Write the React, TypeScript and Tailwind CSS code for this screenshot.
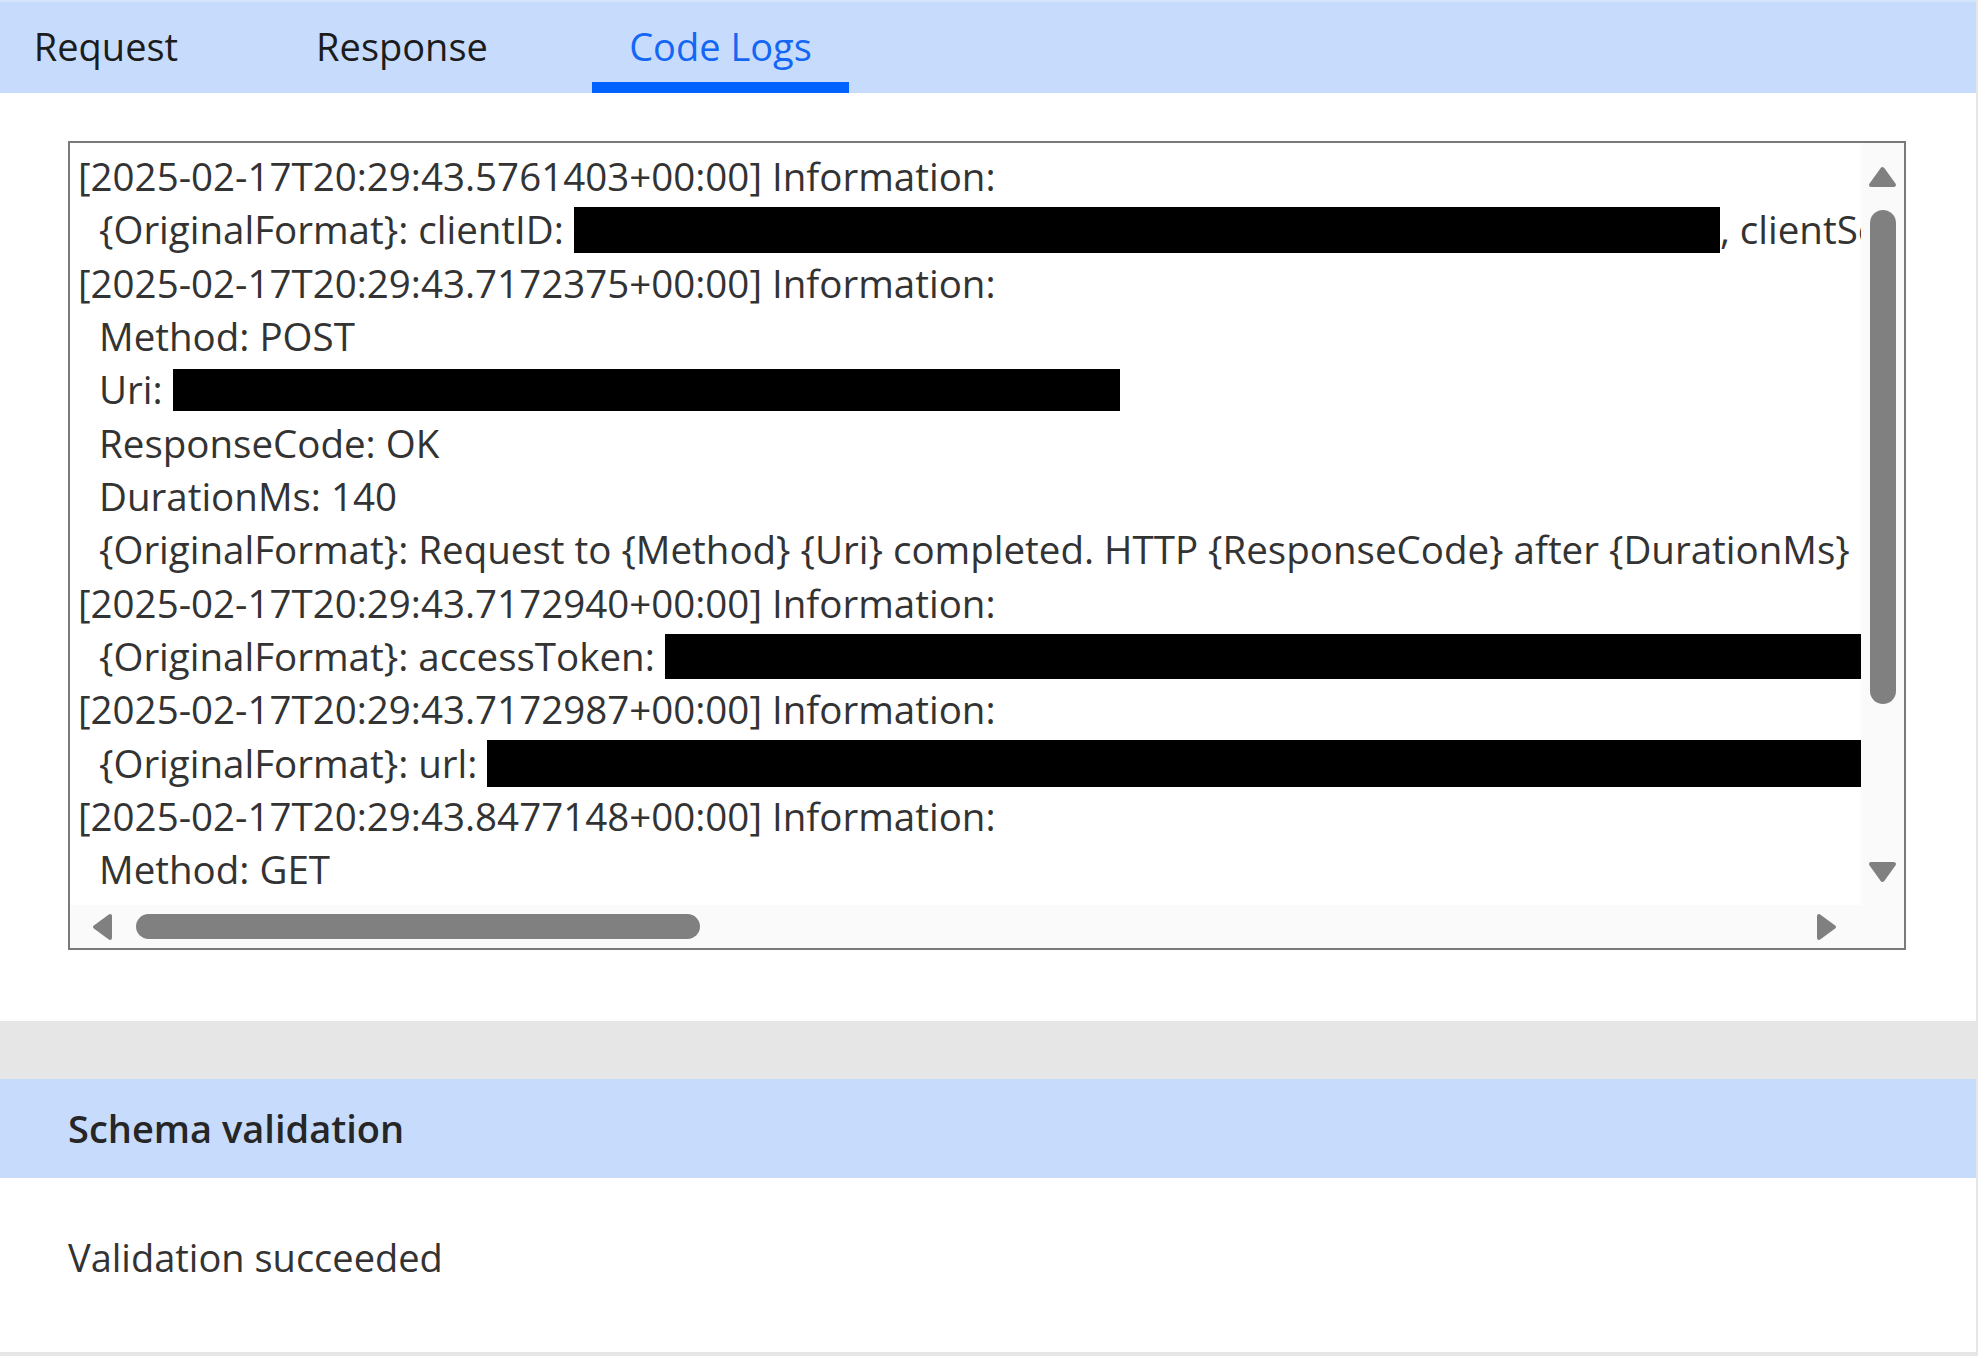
import React from "react";

type Part = { text?: string; bar?: { w: number; h: number } };

interface LogLine {
  indent?: boolean;
  parts: Part[];
}

const LOG_LINES: LogLine[] = [
  { parts: [{ text: "[2025-02-17T20:29:43.5761403+00:00] Information:" }] },
  {
    indent: true,
    parts: [
      { text: "{OriginalFormat}: clientID: " },
      { bar: { w: 1146, h: 46 } },
      { text: ", clientSecret: ********" },
    ],
  },
  { parts: [{ text: "[2025-02-17T20:29:43.7172375+00:00] Information:" }] },
  { indent: true, parts: [{ text: "Method: POST" }] },
  { indent: true, parts: [{ text: "Uri: " }, { bar: { w: 947, h: 42 } }] },
  { indent: true, parts: [{ text: "ResponseCode: OK" }] },
  { indent: true, parts: [{ text: "DurationMs: 140" }] },
  {
    indent: true,
    parts: [
      {
        text: "{OriginalFormat}: Request to {Method} {Uri} completed. HTTP {ResponseCode} after {DurationMs} ms",
      },
    ],
  },
  { parts: [{ text: "[2025-02-17T20:29:43.7172940+00:00] Information:" }] },
  {
    indent: true,
    parts: [{ text: "{OriginalFormat}: accessToken: " }, { bar: { w: 1600, h: 45 } }],
  },
  { parts: [{ text: "[2025-02-17T20:29:43.7172987+00:00] Information:" }] },
  {
    indent: true,
    parts: [{ text: "{OriginalFormat}: url: " }, { bar: { w: 1600, h: 47 } }],
  },
  { parts: [{ text: "[2025-02-17T20:29:43.8477148+00:00] Information:" }] },
  { indent: true, parts: [{ text: "Method: GET" }] },
];

const TABS = [
  { label: "Request", width: "w-[212px]" },
  { label: "Response", width: "w-[240px]" },
  { label: "Code Logs", width: "w-[257px]", active: true },
];

function Arrow({ dir }: { dir: "up" | "down" | "left" | "right" }) {
  const points = {
    up: "3,19 14.5,3 26,19",
    down: "3,3 14.5,19 26,3",
    left: "18,3 18,25 3,14",
    right: "3,3 3,25 18,14",
  }[dir];
  const vertical = dir === "up" || dir === "down";
  return (
    <svg viewBox={vertical ? "0 0 29 22" : "0 0 21 28"} className={vertical ? "w-[29px] h-[22px]" : "w-[21px] h-[28px]"}>
      <polygon points={points} fill="#808080" stroke="#808080" strokeWidth="4" strokeLinejoin="round" />
    </svg>
  );
}

function TabBar() {
  return (
    <div className="flex h-[93px] gap-[70px] bg-[#c7dcfd] border-t-2 border-[#d5e4fd]">
      {TABS.map((tab) => (
        <div
          key={tab.label}
          className={`${tab.width} h-full flex justify-center pt-[19px] text-[38px] leading-[50px] ${
            tab.active ? "text-[#1466f5] border-b-[11px] border-[#0062ff]" : "text-[#1c1c1c]"
          }`}
        >
          {tab.label}
        </div>
      ))}
    </div>
  );
}

function LogBox() {
  return (
    <div className="border-2 border-[#7a7a7a] grid grid-cols-[1fr_43px] grid-rows-[762px_43px]">
      <div className="overflow-hidden bg-white pl-[8px] pt-[7px] text-[38.5px] leading-[53.33px] text-[#333333] whitespace-pre">
        {LOG_LINES.map((line, i) => (
          <div key={i} className={`flex items-center h-[53.33px] ${line.indent ? "pl-[21px]" : ""}`}>
            {line.parts.map((part, j) =>
              part.bar ? (
                <span
                  key={j}
                  className="inline-block bg-black shrink-0"
                  style={{ width: part.bar.w, height: part.bar.h }}
                />
              ) : (
                <span key={j} className="shrink-0">
                  {part.text}
                </span>
              )
            )}
          </div>
        ))}
      </div>
      <div className="bg-[#fafafa] flex flex-col items-center pt-[23px] pb-[22px]">
        <Arrow dir="up" />
        <div className="mt-[22px] w-[26px] h-[494px] rounded-full bg-[#808080]" />
        <div className="flex-1" />
        <Arrow dir="down" />
      </div>
      <div className="bg-[#fafafa] flex items-center pl-[22px] pr-[24px]">
        <Arrow dir="left" />
        <div className="ml-[23px] w-[564px] h-[25px] rounded-full bg-[#808080]" />
        <div className="flex-1" />
        <Arrow dir="right" />
      </div>
      <div className="bg-[#fafafa]" />
    </div>
  );
}

export default function App() {
  return (
    <div
      className="w-[1978px] h-[1356px] bg-white border-r-2 border-b-[4px] border-[#e6e6e6] flex flex-col"
      style={{ fontFamily: '"Segoe UI", "Open Sans", sans-serif' }}
    >
      <TabBar />
      <div className="pt-[48px] pb-[71px] pl-[68px] pr-[70px]">
        <LogBox />
      </div>
      <div className="h-[58px] bg-[#e6e6e6]" />
      <div className="h-[99px] bg-[#c7dcfd] flex items-center px-[68px] text-[38px] font-semibold text-[#262626]">
        Schema validation
      </div>
      <div className="flex-1 px-[68px] pt-[54px] text-[38px] leading-[50px] text-[#333333]">
        Validation succeeded
      </div>
    </div>
  );
}
